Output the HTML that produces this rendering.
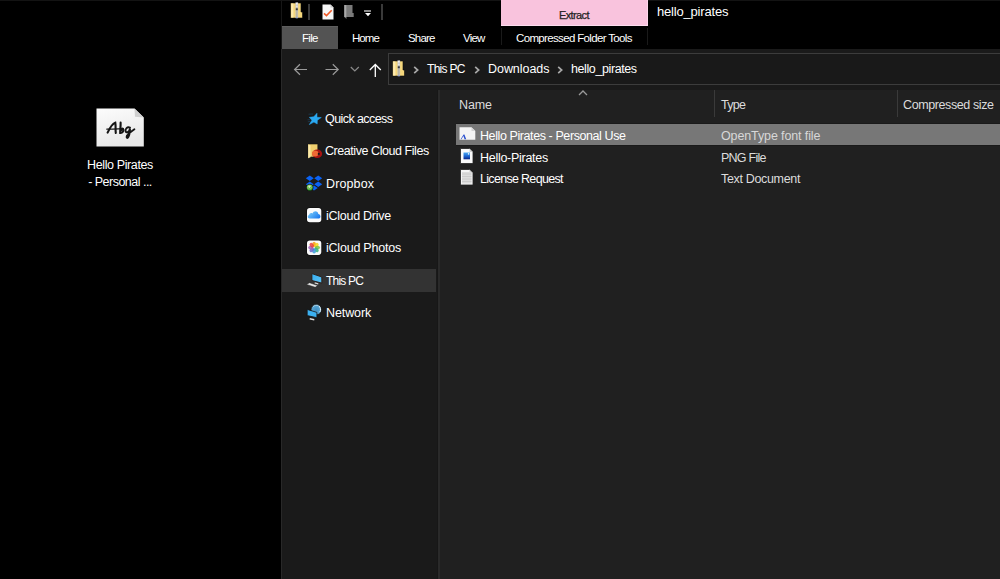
<!DOCTYPE html>
<html><head><meta charset="utf-8">
<style>
*{margin:0;padding:0;box-sizing:border-box}
html,body{width:1000px;height:579px;overflow:hidden;background:#000;font-family:"Liberation Sans",sans-serif;color:#fff}
.a{position:absolute;white-space:nowrap}
.t{font-size:12.5px;line-height:15px}
.s{font-size:11.5px;line-height:15px}
svg{position:absolute;overflow:visible}
</style></head><body>
<!-- ============ desktop icon ============ -->
<svg style="left:96px;top:108px" width="48" height="39" viewBox="0 0 48 39">
<defs><linearGradient id="pg" x1="0" y1="0" x2="0.3" y2="1"><stop offset="0" stop-color="#fcfcfc"/><stop offset="1" stop-color="#e8e8e8"/></linearGradient></defs>
<path d="M0.5 0.5 H38.5 L47.8 9.5 V38.5 H0.5 Z" fill="url(#pg)"/>
<path d="M38.5 0.5 L39 8.8 L47.8 9.5 Z" fill="#cfcfcf"/>
<g fill="none" stroke="#151515" stroke-linecap="round">
<path d="M11.6 24.6 C13.5 20.5 16.5 15.8 19.3 14.6 C19.9 17.5 19.3 22 19.8 25" stroke-width="2.1"/>
<path d="M10.8 21.2 C14.5 20.9 21 21.2 26.8 20.6" stroke-width="1.2"/>
<path d="M24.6 14.6 C24.8 18 24 22.5 24.2 25 C26.5 25.3 28.2 22.6 27 20.8 C26.2 20.2 25.4 21 25.2 22" stroke-width="2.1"/>
<path d="M34 19.6 C31.2 18.4 29 20.8 29.6 23.4 C30.4 25.2 33.2 24.2 34 20.8 C33.9 24.5 33.4 27.8 31.9 29.6 C30.8 30.6 30.3 29.4 30.9 27.8 C32 25.8 34.2 24.2 38.4 21.2" stroke-width="1.9"/>
</g>
</svg>
<div class="a t" style="left:80px;top:158px;width:80px;text-align:center;letter-spacing:-0.38px">Hello Pirates</div>
<div class="a t" style="left:80px;top:175px;width:80px;text-align:center;letter-spacing:-0.52px">- Personal ...</div>

<!-- ============ window frame ============ -->
<div class="a" style="left:0;top:0;width:1000px;height:1px;background:#131313"></div>
<div class="a" style="left:281px;top:1px;width:1px;height:48px;background:#161616"></div>
<div class="a" style="left:281px;top:49px;width:1px;height:530px;background:#282828"></div>

<!-- QAT icons -->
<svg style="left:290px;top:2px" width="14" height="17" viewBox="0 0 14 17">
<path d="M0.5 1 H11 V10 H12.5 V16 H0.5 Z" fill="#f5d77c" stroke="#0a0a0a" stroke-width="0.6"/>
<rect x="1.2" y="1.5" width="2.2" height="14" fill="#fdeab0"/>
<rect x="5.5" y="0.3" width="2.6" height="15.9" fill="#c4c4c4"/>
<rect x="5.9" y="1" width="1.8" height="1.6" fill="#f2f2f2"/>
<rect x="5.9" y="3.6" width="1.8" height="1.4" fill="#e6e6e6"/>
<rect x="5.8" y="6.3" width="2" height="2" fill="#3a3a3a"/>
<rect x="6.1" y="9" width="1.4" height="7" fill="#b9b4a0"/>
<rect x="6.1" y="15" width="1.4" height="1.2" fill="#8ea0d8"/>
</svg>
<div class="a" style="left:308px;top:4px;width:2px;height:16px;background:#3a3a3a"></div>
<svg style="left:322px;top:4px" width="12" height="16" viewBox="0 0 12 16">
<path d="M0.5 0.5 H8.5 L11.5 3.5 V15.5 H0.5 Z" fill="#f7f7f7"/>
<path d="M8.5 0.5 V3.5 H11.5 Z" fill="#c8c8c8"/>
<path d="M2 9.3 L4.5 11.6 L9.7 6.3" fill="none" stroke="#f05a28" stroke-width="1.6"/>
</svg>
<svg style="left:344px;top:5px" width="10" height="15" viewBox="0 0 10 15">
<path d="M0.3 0 H8.5 V8 H9.7 V12 H2.5 L2.5 14 L0.3 12 Z" fill="#7a7a7a"/>
<rect x="0.3" y="0" width="2" height="12" fill="#a8a8a8"/>
</svg>
<div class="a" style="left:364px;top:10px;width:7px;height:2px;background:#8a8a8a"></div>
<svg style="left:365px;top:13px" width="6" height="4" viewBox="0 0 6 4"><path d="M0 0 H6 L3 3.2 Z" fill="#fff"/></svg>
<div class="a" style="left:381px;top:4px;width:2px;height:16px;background:#3a3a3a"></div>

<!-- ribbon tabs -->
<div class="a" style="left:282px;top:26px;width:56px;height:23px;background:#535353;border-top:1px solid #5e5e5e"></div>
<div class="a s" style="left:302px;top:31px;letter-spacing:-0.71px">File</div>
<div class="a s" style="left:352px;top:31px;letter-spacing:-0.93px">Home</div>
<div class="a s" style="left:408px;top:31px;letter-spacing:-0.82px">Share</div>
<div class="a s" style="left:463px;top:31px;letter-spacing:-0.8px">View</div>
<div class="a" style="left:501px;top:0;width:147px;height:26px;background:#f9c3dd;border-right:1px solid #fcd6ea;border-bottom:1px solid #fddcee"></div>
<div class="a" style="left:501px;top:28px;width:1px;height:17px;background:#1a1a1a"></div>
<div class="a" style="left:647px;top:28px;width:1px;height:17px;background:#1a1a1a"></div>
<div class="a" style="left:559px;top:7px;font-size:11px;line-height:16px;color:#222;letter-spacing:-0.61px;-webkit-text-stroke:0.25px #222">Extract</div>
<div class="a s" style="left:516px;top:31px;letter-spacing:-0.65px">Compressed Folder Tools</div>
<div class="a" style="left:657px;top:4px;font-size:13px;line-height:16px;letter-spacing:-0.19px">hello_pirates</div>

<!-- ============ nav band ============ -->
<div class="a" style="left:282px;top:49px;width:718px;height:41px;background:#1a1a1a"></div>
<svg style="left:293px;top:63px" width="16" height="13" viewBox="0 0 16 13">
<path d="M1.5 6.5 H14 M7 1.2 L1.6 6.5 L7 11.8" fill="none" stroke="#9a9a9a" stroke-width="1.2"/></svg>
<svg style="left:324px;top:63px" width="16" height="13" viewBox="0 0 16 13">
<path d="M1.5 6.5 H14.3 M8.8 1.2 L14.2 6.5 L8.8 11.8" fill="none" stroke="#9a9a9a" stroke-width="1.2"/></svg>
<svg style="left:350px;top:66px" width="10" height="7" viewBox="0 0 10 7">
<path d="M0.8 1 L4.8 5 L8.8 1" fill="none" stroke="#8a8a8a" stroke-width="1.2"/></svg>
<svg style="left:369px;top:63px" width="13" height="15" viewBox="0 0 13 15">
<path d="M6.3 1.5 V14 M0.8 7 L6.3 1.5 L11.8 7" fill="none" stroke="#fff" stroke-width="1.3"/></svg>
<div class="a" style="left:388px;top:53px;width:620px;height:32px;background:#191919;border:1px solid #3c3c3c"></div>
<svg style="left:392px;top:60px" width="14" height="17" viewBox="0 0 14 17">
<path d="M0.5 1 H11 V10 H12.5 V16 H0.5 Z" fill="#f5d77c" stroke="#0a0a0a" stroke-width="0.6"/>
<rect x="1.2" y="1.5" width="2.2" height="14" fill="#fdeab0"/>
<rect x="5.5" y="0.3" width="2.6" height="15.9" fill="#c4c4c4"/>
<rect x="5.9" y="1" width="1.8" height="1.6" fill="#f2f2f2"/>
<rect x="5.9" y="3.6" width="1.8" height="1.4" fill="#e6e6e6"/>
<rect x="5.8" y="6.3" width="2" height="2" fill="#3a3a3a"/>
<rect x="6.1" y="9" width="1.4" height="7" fill="#b9b4a0"/>
<rect x="6.1" y="15" width="1.4" height="1.2" fill="#8ea0d8"/>
</svg>
<svg style="left:413px;top:66px" width="7" height="8" viewBox="0 0 7 8"><path d="M1.2 0.8 L4.7 4 L1.2 7.2" fill="none" stroke="#a8a8a8" stroke-width="1.7"/></svg>
<div class="a t" style="left:427px;top:62px;letter-spacing:-0.7px;font-size:12px">This PC</div>
<svg style="left:557px;top:66px" width="7" height="8" viewBox="0 0 7 8"><path d="M1.2 0.8 L4.7 4 L1.2 7.2" fill="none" stroke="#a8a8a8" stroke-width="1.7"/></svg>
<svg style="left:474px;top:66px" width="7" height="8" viewBox="0 0 7 8"><path d="M1.2 0.8 L4.7 4 L1.2 7.2" fill="none" stroke="#a8a8a8" stroke-width="1.7"/></svg>
<div class="a t" style="left:488px;top:62px;letter-spacing:-0.05px">Downloads</div>
<div class="a t" style="left:571px;top:62px;letter-spacing:-0.4px">hello_pirates</div>

<!-- ============ nav pane ============ -->
<div class="a" style="left:282px;top:90px;width:156px;height:489px;background:#1a1a1a;border-right:1px solid #171717"></div>
<div class="a" style="left:438px;top:90px;width:2px;height:489px;background:#2a2a2a"></div>
<div class="a" style="left:440px;top:90px;width:560px;height:489px;background:#202020"></div>
<div class="a" style="left:282px;top:269px;width:154px;height:23px;background:#333"></div>

<!-- star -->
<svg style="left:307px;top:112px" width="16" height="14" viewBox="0 0 16 14">
<path d="M1.5 2.2 L6 2.0 M0.5 7.8 L3.3 7.6 M0.8 9.8 L3.2 9.4" stroke="#1d6ea6" stroke-width="0.6" opacity="0.55"/>
<path d="M10.00 1.20 L10.01 5.31 L14.30 5.50 L10.39 8.15 L10.20 12.00 L6.95 10.09 L2.30 12.60 L4.90 8.18 L2.30 5.30 L6.76 4.74 Z" fill="#2aa9f2" stroke="#2aa9f2" stroke-width="0.5" stroke-linejoin="round"/>
</svg>
<div class="a t" style="left:325px;top:112px;letter-spacing:-0.58px">Quick access</div>
<!-- creative cloud folder -->
<svg style="left:307px;top:143px" width="16" height="16" viewBox="0 0 16 16">
<path d="M1 1 H10.8 V14 H3 L1 15.5 Z" fill="#f0cf6e" stroke="#111" stroke-width="0.6"/>
<path d="M1.2 1.2 L3.5 2.5 V14.3 L1.2 15.3 Z" fill="#fbe9a8"/>
<ellipse cx="10.2" cy="10.8" rx="5" ry="4.3" fill="#a51212"/>
<ellipse cx="8.2" cy="10.6" rx="3.2" ry="3" fill="#ef6a33"/>
<circle cx="11.8" cy="10.9" r="1.1" fill="#1a1a1a"/>
</svg>
<div class="a t" style="left:325px;top:144px;letter-spacing:-0.44px">Creative Cloud Files</div>
<!-- dropbox -->
<svg style="left:305px;top:175px" width="18" height="17" viewBox="0 0 18 17">
<path d="M4.8 0.6 L8.8 3.3 L4.8 6 L0.8 3.3 Z M13.2 0.6 L17.2 3.3 L13.2 6 L9.2 3.3 Z M4.8 6.6 L8.8 9.3 L4.8 12 L0.8 9.3 Z M13.2 6.6 L17.2 9.3 L13.2 12 L9.2 9.3 Z M9 10.6 L12.8 13.1 L9 15.6 L5.2 13.1 Z" fill="#0a63f5"/>
<defs><radialGradient id="gb" cx="0.45" cy="0.4" r="0.6"><stop offset="0" stop-color="#e8f5e0"/><stop offset="0.55" stop-color="#7cc65a"/><stop offset="1" stop-color="#1f8a1f"/></radialGradient></defs>
<circle cx="4.8" cy="12.5" r="3.6" fill="#111"/>
<circle cx="4.8" cy="12.5" r="3.1" fill="url(#gb)"/>
<path d="M3.2 12.5 L4.4 13.7 L6.5 11.3" fill="none" stroke="#5aa648" stroke-width="0.9"/>
</svg>
<div class="a t" style="left:326px;top:177px;letter-spacing:0.13px">Dropbox</div>
<!-- iCloud drive -->
<svg style="left:306px;top:207px" width="17" height="17" viewBox="0 0 17 17">
<defs><linearGradient id="cl" x1="0" y1="0.2" x2="1" y2="0.8"><stop offset="0" stop-color="#7ccdf9"/><stop offset="1" stop-color="#1676ee"/></linearGradient></defs>
<rect x="0.3" y="0.3" width="15.7" height="15.7" rx="3.3" fill="#111"/>
<rect x="1" y="1" width="14.3" height="14.3" rx="2.8" fill="#fafafa"/>
<path d="M3.6 11.6 C1.4 11.6 1.2 8.6 3.1 8.1 C3.2 6.1 5.4 5.5 6.5 6.5 C7.4 3.6 12 3.5 12.3 7 C14.9 7 15.2 11.5 12.9 11.6 Z" fill="url(#cl)"/>
</svg>
<div class="a t" style="left:326px;top:209px;letter-spacing:-0.26px">iCloud Drive</div>
<!-- iCloud photos -->
<svg style="left:306px;top:240px" width="17" height="17" viewBox="0 0 17 17">
<rect x="0.3" y="-0.3" width="15.7" height="15.9" rx="3.3" fill="#111"/>
<rect x="1" y="0.4" width="14.3" height="14.5" rx="2.8" fill="#fafafa"/>
<g transform="translate(8.1 7.6)">
<ellipse cx="0" cy="-3.3" rx="1.9" ry="2.6" fill="#f9a01b" opacity="0.9"/>
<ellipse cx="0" cy="-3.3" rx="1.9" ry="2.6" fill="#f7d21a" opacity="0.85" transform="rotate(45)"/>
<ellipse cx="0" cy="-3.3" rx="1.9" ry="2.6" fill="#7cc142" opacity="0.85" transform="rotate(90)"/>
<ellipse cx="0" cy="-3.3" rx="1.9" ry="2.6" fill="#35b27c" opacity="0.85" transform="rotate(135)"/>
<ellipse cx="0" cy="-3.3" rx="1.9" ry="2.6" fill="#3a9bdc" opacity="0.85" transform="rotate(180)"/>
<ellipse cx="0" cy="-3.3" rx="1.9" ry="2.6" fill="#6a67c9" opacity="0.85" transform="rotate(225)"/>
<ellipse cx="0" cy="-3.3" rx="1.9" ry="2.6" fill="#a361b8" opacity="0.85" transform="rotate(270)"/>
<ellipse cx="0" cy="-3.3" rx="1.9" ry="2.6" fill="#e8423c" opacity="0.85" transform="rotate(315)"/>
</g>
</svg>
<div class="a t" style="left:326px;top:241px;letter-spacing:-0.22px">iCloud Photos</div>
<!-- this PC -->
<svg style="left:306px;top:272px" width="18" height="17" viewBox="0 0 18 17">
<defs><linearGradient id="sc" x1="0" y1="0" x2="1" y2="1"><stop offset="0" stop-color="#35acf0"/><stop offset="1" stop-color="#5cc4f6"/></linearGradient></defs>
<path d="M5.9 1.6 L15.8 5 V11.1 L5.9 8.5 Z" fill="url(#sc)" stroke="#2a1a12" stroke-width="0.9" stroke-linejoin="round"/>
<path d="M8.8 10.3 L12.4 11.2 L12.2 12.4 L8.6 11.5 Z" fill="#d6d6d6"/>
<path d="M0.4 12.4 L3.5 10.7 L11.8 13.6 L9.2 15.3 Z" fill="#e6e6e6" stroke="#1a1a1a" stroke-width="0.5"/>
</svg>
<div class="a t" style="left:326px;top:274px;letter-spacing:-0.8px;font-size:12px">This PC</div>
<!-- network -->
<svg style="left:306px;top:303px" width="18" height="18" viewBox="0 0 18 18">
<defs><radialGradient id="gl" cx="0.5" cy="0.5" r="0.6"><stop offset="0" stop-color="#3f8fc4"/><stop offset="0.7" stop-color="#5aa6d4"/><stop offset="1" stop-color="#9fd2ee"/></radialGradient></defs>
<circle cx="10.2" cy="6.7" r="5.1" fill="url(#gl)" stroke="#141414" stroke-width="0.6"/>
<path d="M12.6 2.7 C14.6 4.1 15.2 7.1 13.8 9.1" fill="none" stroke="#e6f4fb" stroke-width="1"/>
<path d="M7 3.5 C8.5 2.3 11 2.1 12 2.5" fill="none" stroke="#cfe8f6" stroke-width="0.7"/>
<path d="M1.2 6.4 L10.9 9.4 V14.7 L1.2 12.6 Z" fill="#3bb0f0" stroke="#141414" stroke-width="0.8" stroke-linejoin="round"/>
<path d="M3.8 15 L8.4 16 L8.2 17.4 L3.6 16.6 Z" fill="#e0e0e0"/>
</svg>
<div class="a t" style="left:326px;top:306px;letter-spacing:-0.1px">Network</div>

<!-- ============ content ============ -->
<svg style="left:578px;top:90px" width="10" height="6" viewBox="0 0 10 6"><path d="M1 5 L5 1 L9 5" fill="none" stroke="#9a9a9a" stroke-width="1.3"/></svg>
<div class="a" style="left:714px;top:90px;width:1px;height:27px;background:#3a3a3a"></div>
<div class="a" style="left:897px;top:90px;width:1px;height:27px;background:#3a3a3a"></div>
<div class="a t" style="left:459px;top:98px;color:#dcdcdc;letter-spacing:-0.13px">Name</div>
<div class="a t" style="left:721px;top:98px;color:#dcdcdc;letter-spacing:-0.72px">Type</div>
<div class="a t" style="left:903px;top:98px;color:#dcdcdc;letter-spacing:-0.4px">Compressed size</div>

<div class="a" style="left:456px;top:123px;width:544px;height:23px;background:#777;border-top:1px solid #1a1a1a;border-bottom:1px solid #1a1a1a"></div>
<!-- font file icon -->
<svg style="left:459px;top:127px" width="17" height="14" viewBox="0 0 17 14">
<path d="M0.5 0.3 H12.5 L16.3 4 V12.8 H0.5 Z" fill="#f4f4f4"/>
<path d="M12.5 0.3 V4 H16.3 Z" fill="#d4d4d4"/>
<path d="M1.6 12.2 L4.6 7.4 L5.4 7.4 L7.2 12.2 L5.6 12.2 L4.4 9 L2.4 12.2 Z" fill="#2a4fcf"/>
</svg>
<div class="a t" style="left:480px;top:129px;letter-spacing:-0.41px">Hello Pirates - Personal Use</div>
<!-- png icon -->
<svg style="left:460px;top:148px" width="14" height="16" viewBox="0 0 14 16">
<path d="M0.5 0.5 H9.5 L13 4 V15.5 H0.5 Z" fill="#fafafa" stroke="#222" stroke-width="0.8"/>
<path d="M9.5 0.5 V4 H13 Z" fill="#cfcfcf"/>
<defs><linearGradient id="pi" x1="0" y1="0" x2="0" y2="1"><stop offset="0" stop-color="#4aa8f2"/><stop offset="0.55" stop-color="#1b63d0"/><stop offset="1" stop-color="#0a2384"/></linearGradient></defs>
<rect x="3.5" y="4.5" width="6.5" height="6.8" fill="url(#pi)"/>
<circle cx="8.6" cy="5.9" r="0.8" fill="#e8f4ff"/>
</svg>
<div class="a t" style="left:480px;top:151px;letter-spacing:-0.28px">Hello-Pirates</div>
<!-- text icon -->
<svg style="left:460px;top:169px" width="14" height="17" viewBox="0 0 14 17">
<path d="M0.5 0.5 H9.5 L13 4 V16 H0.5 Z" fill="#f4f4f4" stroke="#222" stroke-width="0.8"/>
<path d="M9.5 0.5 V4 H13 Z" fill="#cfcfcf"/>
<rect x="2" y="3" width="9.5" height="11.5" fill="#dcdcdc"/>
<path d="M2 5 H11.5 M2 7.5 H11.5 M2 10 H11.5 M2 12.5 H11.5" stroke="#c6c6c6" stroke-width="0.8"/>
</svg>
<div class="a t" style="left:480px;top:172px;letter-spacing:-0.69px">License Request</div>
<div class="a t" style="left:721px;top:129px;color:#d8d8d8;letter-spacing:-0.12px">OpenType font file</div>
<div class="a t" style="left:721px;top:151px;color:#dcdcdc;letter-spacing:-0.75px">PNG File</div>
<div class="a t" style="left:721px;top:172px;color:#dcdcdc;letter-spacing:-0.33px">Text Document</div>
</body></html>
